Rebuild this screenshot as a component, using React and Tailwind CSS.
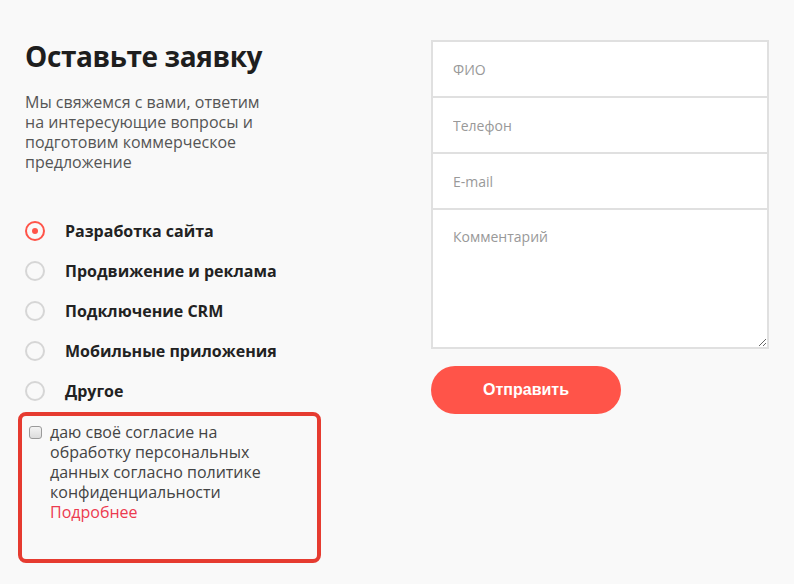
import { useState } from 'react';

const services = [
  'Разработка сайта',
  'Продвижение и реклама',
  'Подключение CRM',
  'Мобильные приложения',
  'Другое',
];

export default function App() {
  const [active, setActive] = useState(0);

  return (
    <div className="min-h-[584px] w-[794px] bg-[#f9f9f9] px-[25px] pt-[40px] font-['Open_Sans',sans-serif] flex justify-between">
      {/* Левая колонка */}
      <div className="w-[300px]">
        <h2 className="text-[28px] leading-[32px] font-bold text-[#1e1e1e] tracking-[-0.4px]">Оставьте заявку</h2>
        <p className="mt-[20px] w-[248px] text-[16px] leading-[20px] text-[#555]">
          Мы свяжемся с вами, ответим на интересующие вопросы и подготовим коммерческое предложение
        </p>

        <div className="mt-[39px]">
          {services.map((s, i) => (
            <label key={s} className="h-[40px] flex items-center cursor-pointer" onClick={() => setActive(i)}>
              <span
                className={
                  active === i
                    ? 'w-[20px] h-[20px] rounded-full border-2 border-[#ff5449] flex items-center justify-center'
                    : 'w-[20px] h-[20px] rounded-full border-2 border-[#d6d6d6]'
                }
              >
                {active === i && <span className="w-[6px] h-[6px] rounded-full bg-[#ff5449]" />}
              </span>
              <span className="ml-[20px] text-[16px] font-bold text-[#222]">{s}</span>
            </label>
          ))}
        </div>

        <div className="mt-[1px] -ml-[7px] w-[303px] h-[151px] border-4 border-[#e63b30] rounded-[8px] pt-[6px] pl-[7px] flex items-start">
          <span className="mt-[4px] w-[13px] h-[13px] shrink-0 rounded-[3px] border border-[#9a9a9a] bg-gradient-to-b from-[#f4f4f4] to-[#dcdcdc]" />
          <div className="ml-[8px] w-[232px] text-[16px] leading-[20px] text-[#444]">
            даю своё согласие на обработку персональных данных согласно политике конфиденциальности{' '}
            <a href="#" className="text-[#ec3a4f]">Подробнее</a>
          </div>
        </div>
      </div>

      {/* Форма */}
      <div className="w-[338px]">
        <div className="border-2 border-[#e0e0e0] bg-white flex flex-col">
          <input placeholder="ФИО" className="h-[54px] px-[20px] text-[14px] text-[#333] placeholder:text-[#999] outline-none" />
          <input placeholder="Телефон" className="h-[56px] border-t-2 border-[#e0e0e0] px-[20px] text-[14px] text-[#333] placeholder:text-[#999] outline-none" />
          <input placeholder="E-mail" className="h-[56px] border-t-2 border-[#e0e0e0] px-[20px] text-[14px] text-[#333] placeholder:text-[#999] outline-none" />
          <textarea placeholder="Комментарий" className="h-[139px] border-t-2 border-[#e0e0e0] px-[20px] pt-[17px] text-[14px] leading-[20px] text-[#333] placeholder:text-[#999] outline-none resize-y" />
        </div>
        <button className="mt-[17px] w-[190px] h-[48px] rounded-full bg-[#ff5449] text-white text-[16px] font-bold font-['Liberation_Sans',sans-serif]">
          Отправить
        </button>
      </div>
    </div>
  );
}
